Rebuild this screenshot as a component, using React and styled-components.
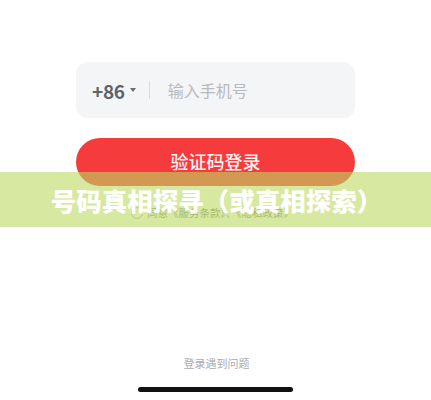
import styled, { createGlobalStyle } from "styled-components";

const GlobalStyle = createGlobalStyle`
  html, body {
    margin: 0;
    padding: 0;
    background: #ffffff;
  }
  body {
    font-family: "Noto Sans CJK SC", "Noto Sans", sans-serif;
  }
`;

const Page = styled.div`
  position: relative;
  height: 400px;
  box-sizing: border-box;
  padding: 62px 76px 8px;
  display: flex;
  flex-direction: column;
  overflow: hidden;
`;

const PhoneField = styled.div`
  height: 56px;
  border-radius: 12px;
  background: #f4f5f7;
  display: flex;
  align-items: center;
  padding-left: 16px;
`;

const Code = styled.span`
  font-size: 19px;
  font-weight: 700;
  color: #60636b;
  letter-spacing: -0.3px;
  line-height: 1;
`;

const Caret = styled.span`
  width: 0;
  height: 0;
  margin-left: 5px;
  border-left: 3px solid transparent;
  border-right: 3px solid transparent;
  border-top: 4px solid #6a6d75;
`;

const Divider = styled.span`
  width: 1px;
  height: 18px;
  background: #dcdde0;
  margin: 0 18px 0 13px;
`;

const Placeholder = styled.span`
  font-size: 16px;
  color: #b9babd;
  line-height: 1;
`;

const LoginButton = styled.button`
  margin-top: 20px;
  height: 48px;
  border: none;
  border-radius: 24px;
  background: #f53b3c;
  color: #fff4f4;
  font-family: inherit;
  font-size: 18px;
  font-weight: 500;
  display: flex;
  align-items: center;
  justify-content: center;
  padding: 0 0 2px;
`;

const Agreement = styled.div`
  margin-top: 19px;
  display: flex;
  align-items: center;
  justify-content: center;
  gap: 4px;
  font-size: 10.5px;
  color: #8a8c90;
  padding-right: 6px;
`;

const Radio = styled.span`
  width: 10px;
  height: 10px;
  border-radius: 50%;
  border: 1px solid #b5b7ba;
`;

const Footer = styled.div`
  margin-top: auto;
  display: flex;
  flex-direction: column;
  align-items: center;
  gap: 17px;
`;

const HelpLink = styled.span`
  font-size: 11px;
  color: #a9abae;
  line-height: 14px;
  padding-left: 2px;
`;

const HomeBar = styled.div`
  width: 155px;
  height: 5px;
  border-radius: 3px;
  background: #111111;
`;

const Banner = styled.div`
  position: absolute;
  left: 0;
  right: 0;
  top: 172px;
  height: 55px;
  background: rgba(188, 216, 96, 0.6);
  display: flex;
  align-items: center;
  justify-content: center;
  color: #ffffff;
  font-size: 25.5px;
  font-weight: 900;
  padding-left: 2px;
`;

export default function App() {
  return (
    <>
      <GlobalStyle />
      <Page>
        <PhoneField>
          <Code>+86</Code>
          <Caret />
          <Divider />
          <Placeholder>输入手机号</Placeholder>
        </PhoneField>
        <LoginButton>验证码登录</LoginButton>
        <Agreement>
          <Radio />
          同意《服务条款》、《隐私政策》
        </Agreement>
        <Footer>
          <HelpLink>登录遇到问题</HelpLink>
          <HomeBar />
        </Footer>
        <Banner>号码真相探寻（或真相探索）</Banner>
      </Page>
    </>
  );
}
